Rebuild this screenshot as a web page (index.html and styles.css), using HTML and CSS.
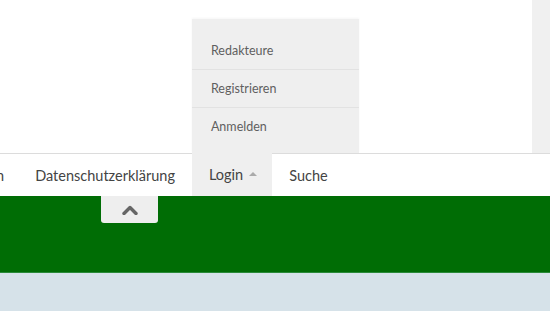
FILE: index.html
```html
<!DOCTYPE html>
<html lang="de">
<head>
<meta charset="utf-8">
<link rel="stylesheet" href="styles.css">
</head>
<body>
<div class="page">
  <div class="top">
    <div class="top-main"></div>
    <div class="top-side"></div>
  </div>
  <nav class="navbar">
    <ul class="menu">
      <li class="item item-first"><a>Aktionen</a></li>
      <li class="item"><a>Datenschutzerklärung</a></li>
      <li class="item item-open">
        <a>Login <span class="caret"></span></a>
        <ul class="dropdown">
          <li><a>Redakteure</a></li>
          <li><a>Registrieren</a></li>
          <li><a>Anmelden</a></li>
        </ul>
      </li>
      <li class="item"><a>Suche</a></li>
    </ul>
  </nav>
  <div class="band">
    <button class="totop" aria-label="Nach oben">
      <svg width="16" height="10" viewBox="0 0 16 10"><path d="M2 8.5 L8 2.5 L14 8.5" fill="none" stroke="#666" stroke-width="3.4" stroke-linecap="round" stroke-linejoin="round"/></svg>
    </button>
  </div>
  <div class="bottom"></div>
</div>
</body>
</html>
```
FILE: styles.css
```css
* { box-sizing: border-box; }
html, body { margin: 0; padding: 0; }
body { font-family: Lato, "Open Sans", sans-serif; background: #fff; overflow: hidden; }
.page { width: 550px; height: 311px; display: flex; flex-direction: column; }
.top { height: 153px; display: flex; }
.top-main { flex: 1; background: #fff; }
.top-side { width: 18px; background: #f0f0f0; }
.navbar { height: 43px; border-top: 1px solid #dcdcdc; background: #fff; position: relative; z-index: 2; }
.menu { list-style: none; margin: 0 0 0 -71px; padding: 0; display: flex; height: 100%; }
.item { position: relative; display: flex; align-items: center; padding: 0 17px; font-size: 14.5px; color: #444; }
.item-first { padding-right: 14px; }
.item > a { display: flex; align-items: center; gap: 6px; }
.item-open { background: #efefef; margin-top: -1px; padding-right: 15px; }
.caret { width: 0; height: 0; border-left: 4px solid transparent; border-right: 4px solid transparent; border-bottom: 4px solid #aaa; margin-top: -1px; }
.dropdown { position: absolute; left: 0; bottom: 100%; width: 167px; list-style: none; margin: 0; padding: 12px 0 8px; background: #efefef; box-shadow: 0 -1px 2px rgba(0,0,0,0.04); }
.dropdown li { height: 38px; display: flex; align-items: center; padding: 0 19px; font-size: 12.5px; color: #5f5f5f; border-top: 1px solid #e2e2e2; }
.dropdown li:first-child { border-top: none; }
.band { height: 77px; background: #006d05; border-bottom: 1px solid #2a8a3a; display: flex; align-items: flex-start; padding-left: 101px; }
.totop { width: 57px; height: 27px; border: none; background: #eeeeee; border-radius: 0 0 3px 3px; display: flex; align-items: center; justify-content: center; padding: 0; margin: 0; }
.bottom { flex: 1; background: #d6e2e9; }
```
